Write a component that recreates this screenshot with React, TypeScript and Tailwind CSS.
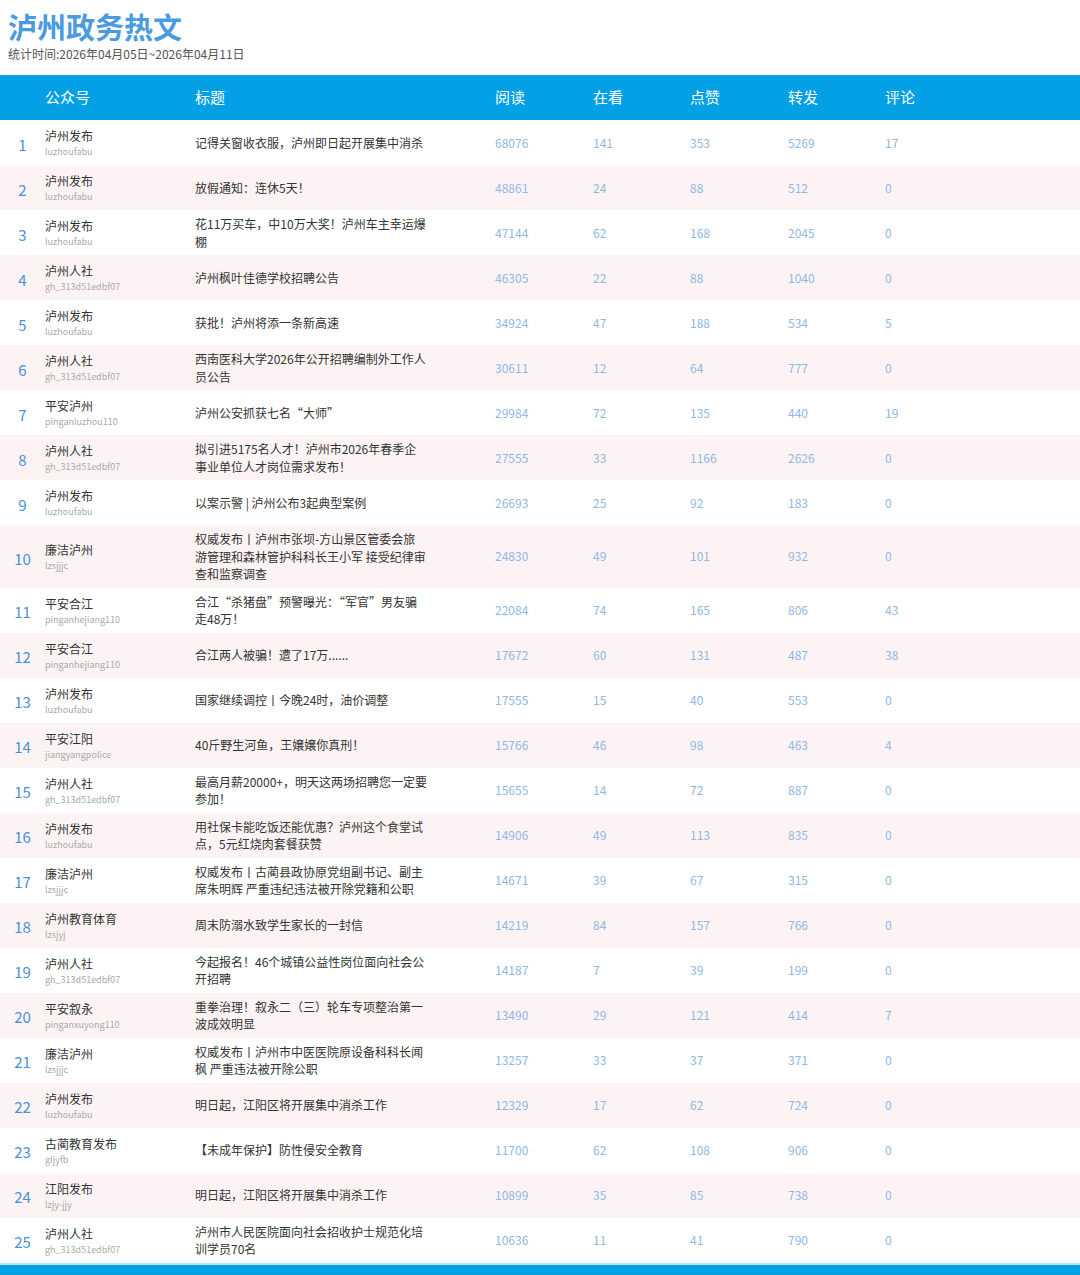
const rows: [string, string, string, number, number, number, number, number][] = [
  ['泸州发布', 'luzhoufabu', '记得关窗收衣服，泸州即日起开展集中消杀', 68076, 141, 353, 5269, 17],
  ['泸州发布', 'luzhoufabu', '放假通知：连休5天！', 48861, 24, 88, 512, 0],
  ['泸州发布', 'luzhoufabu', '花11万买车，中10万大奖！泸州车主幸运爆棚', 47144, 62, 168, 2045, 0],
  ['泸州人社', 'gh_313d51edbf07', '泸州枫叶佳德学校招聘公告', 46305, 22, 88, 1040, 0],
  ['泸州发布', 'luzhoufabu', '获批！泸州将添一条新高速', 34924, 47, 188, 534, 5],
  ['泸州人社', 'gh_313d51edbf07', '西南医科大学2026年公开招聘编制外工作人员公告', 30611, 12, 64, 777, 0],
  ['平安泸州', 'pinganluzhou110', '泸州公安抓获七名“大师”', 29984, 72, 135, 440, 19],
  ['泸州人社', 'gh_313d51edbf07', '拟引进5175名人才！泸州市2026年春季企事业单位人才岗位需求发布！', 27555, 33, 1166, 2626, 0],
  ['泸州发布', 'luzhoufabu', '以案示警 | 泸州公布3起典型案例', 26693, 25, 92, 183, 0],
  ['廉洁泸州', 'lzsjjjc', '权威发布丨泸州市张坝-方山景区管委会旅游管理和森林管护科科长王小军 接受纪律审查和监察调查', 24830, 49, 101, 932, 0],
  ['平安合江', 'pinganhejiang110', '合江“杀猪盘”预警曝光：“军官”男友骗走48万！', 22084, 74, 165, 806, 43],
  ['平安合江', 'pinganhejiang110', '合江两人被骗！遭了17万......', 17672, 60, 131, 487, 38],
  ['泸州发布', 'luzhoufabu', '国家继续调控丨今晚24时，油价调整', 17555, 15, 40, 553, 0],
  ['平安江阳', 'jiangyangpolice', '40斤野生河鱼，王嬢嬢你真刑！', 15766, 46, 98, 463, 4],
  ['泸州人社', 'gh_313d51edbf07', '最高月薪20000+，明天这两场招聘您一定要参加！', 15655, 14, 72, 887, 0],
  ['泸州发布', 'luzhoufabu', '用社保卡能吃饭还能优惠？泸州这个食堂试点，5元红烧肉套餐获赞', 14906, 49, 113, 835, 0],
  ['廉洁泸州', 'lzsjjjc', '权威发布丨古蔺县政协原党组副书记、副主席朱明辉 严重违纪违法被开除党籍和公职', 14671, 39, 67, 315, 0],
  ['泸州教育体育', 'lzsjyj', '周末防溺水致学生家长的一封信', 14219, 84, 157, 766, 0],
  ['泸州人社', 'gh_313d51edbf07', '今起报名！46个城镇公益性岗位面向社会公开招聘', 14187, 7, 39, 199, 0],
  ['平安叙永', 'pinganxuyong110', '重拳治理！叙永二（三）轮车专项整治第一波成效明显', 13490, 29, 121, 414, 7],
  ['廉洁泸州', 'lzsjjjc', '权威发布丨泸州市中医医院原设备科科长闻枫 严重违法被开除公职', 13257, 33, 37, 371, 0],
  ['泸州发布', 'luzhoufabu', '明日起，江阳区将开展集中消杀工作', 12329, 17, 62, 724, 0],
  ['古蔺教育发布', 'gljyfb', '【未成年保护】防性侵安全教育', 11700, 62, 108, 906, 0],
  ['江阳发布', 'lzjy-jjy', '明日起，江阳区将开展集中消杀工作', 10899, 35, 85, 738, 0],
  ['泸州人社', 'gh_313d51edbf07', '泸州市人民医院面向社会招收护士规范化培训学员70名', 10636, 11, 41, 790, 0],
];

const font = { fontFamily: '"Noto Sans CJK SC", "Noto Sans", sans-serif' };

export default function App() {
  return (
    <div className="w-[1080px] h-[1275px] overflow-hidden bg-white" style={font}>
      <div className="h-[75px] pl-[8px] pt-[7px]">
        <h1 className="text-[29px] leading-[38px] font-bold text-[#4a9be0]">泸州政务热文</h1>
        <p className="text-[12px] leading-[18px] text-[#555]">统计时间:2026年04月05日~2026年04月11日</p>
      </div>
      <div className="h-[45px] bg-[#03a0e6] text-white text-[15px] flex items-center">
        <div className="w-[45px]" />
        <div className="w-[150px]">公众号</div>
        <div className="w-[300px]">标题</div>
        <div className="w-[98px]">阅读</div>
        <div className="w-[97px]">在看</div>
        <div className="w-[98px]">点赞</div>
        <div className="w-[97px]">转发</div>
        <div>评论</div>
      </div>
      {rows.map((r, i) => (
        <div key={i} className={`flex items-center min-h-[45px] py-[5px] ${i % 2 ? 'bg-[#fdf3f4]' : 'bg-white'}`}>
          <div className="w-[45px] text-center text-[15px] text-[#4a90d9] pt-[5px]">{i + 1}</div>
          <div className="w-[150px]">
            <div className="text-[12px] leading-[18px] text-[#333]">{r[0]}</div>
            <div className="text-[9px] leading-[13px] text-[#aaa]">{r[1]}</div>
          </div>
          <div className="w-[300px]">
            <div className="w-[232px] text-[12px] leading-[17.5px] text-[#333]">{r[2]}</div>
          </div>
          {[r[3], r[4], r[5], r[6], r[7]].map((v, j) => (
            <div key={j} className={`${j === 0 || j === 2 ? 'w-[98px]' : 'w-[97px]'} text-[12px] text-[#8fb8e4]`}>{v}</div>
          ))}
        </div>
      ))}
      <div className="h-[2px] bg-[#b9e2f7]" />
      <div className="h-[20px] bg-[#03a0e6]" />
    </div>
  );
}
